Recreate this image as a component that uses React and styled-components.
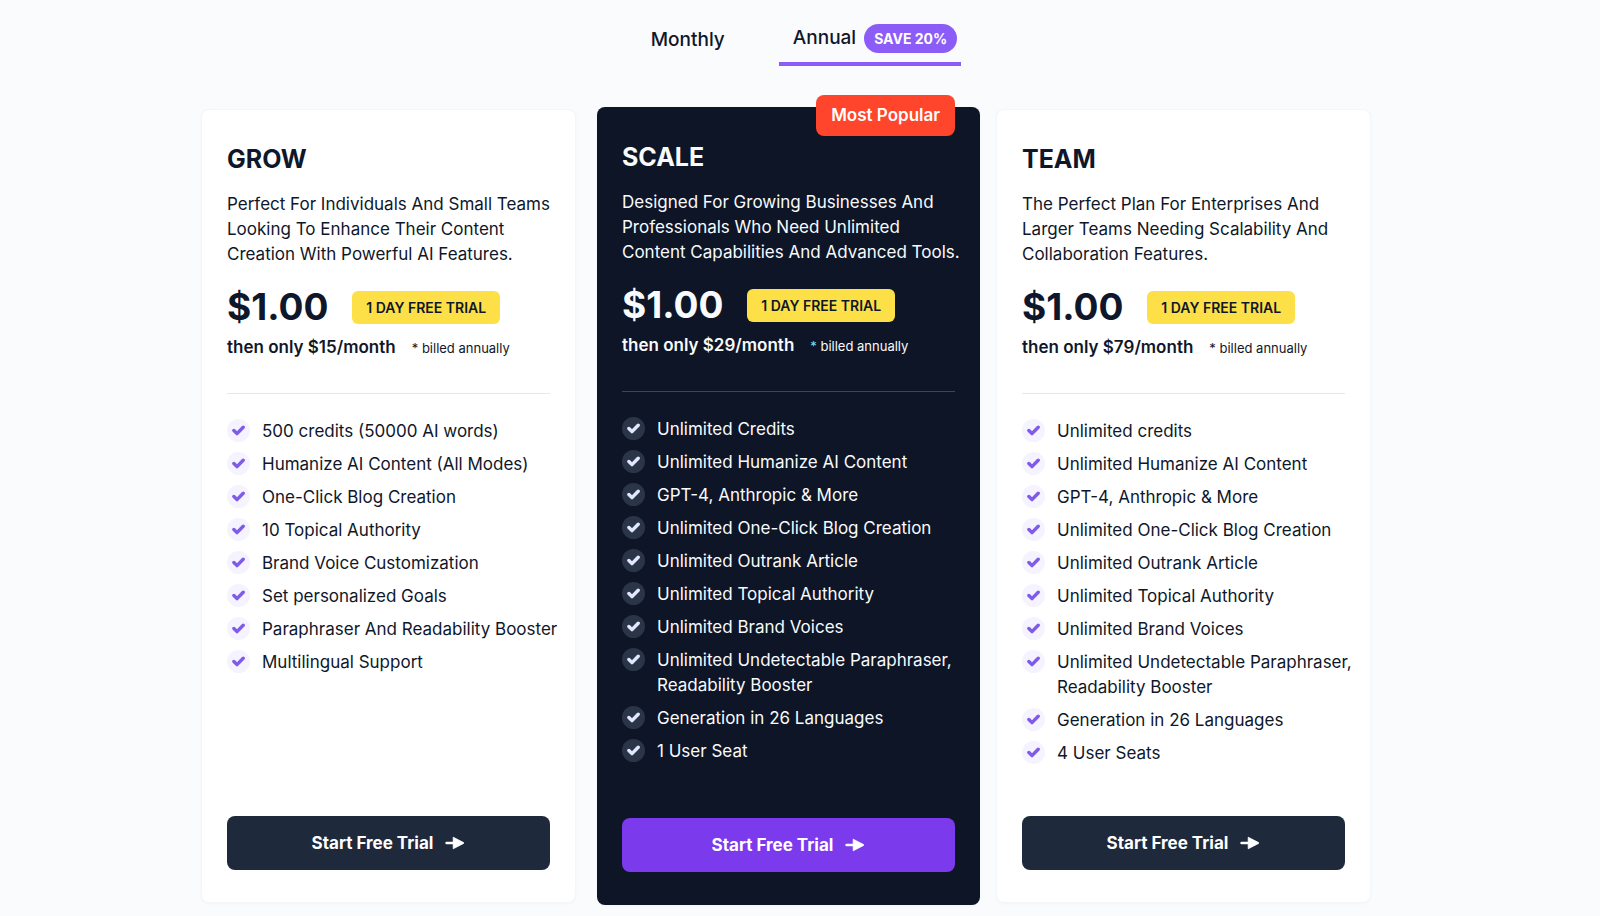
import React from "react";
import styled, { createGlobalStyle } from "styled-components";
import { useState } from "react";

const GlobalStyle = createGlobalStyle`
  * {
    box-sizing: border-box;
  }

  body {
    margin: 0;
    background-color: #fafbfd;
    color: #0f172a;
    font-family: "Inter", "Liberation Sans", sans-serif;
    font-size: 17px;
    line-height: 25px;
  }

  button {
    font-family: inherit;
    cursor: pointer;
  }
`;

const Page = styled.main`
  padding: 12px 42px 11px 14px;
`;

const Container = styled.div`
  max-width: 1170px;
  margin: 0 auto;
`;

const BillingTabs = styled.div`
  display: flex;
  justify-content: center;
  gap: 14px;
  margin-bottom: 41px;
`;

const BillingTab = styled.button`
  display: flex;
  align-items: center;
  gap: 8px;
  height: 54px;
  padding: ${(props) => (props.$active ? "2px 4px 0 14px" : "2px 40px 0")};
  border: 0;
  border-bottom: ${(props) => (props.$active ? "4px solid #8b5cf6" : "0")};
  background: none;
  color: #0f172a;
  font-size: 19px;
  font-weight: 500;
  line-height: 28px;
`;

const SaveBadge = styled.span`
  padding: 0 10px;
  border-radius: 15px;
  background-color: #8b5cf6;
  color: white;
  font-size: 14px;
  font-weight: 700;
  line-height: 29px;
`;

const Plans = styled.div`
  display: grid;
  grid-template-columns: 375fr 388fr 375fr;
  gap: 16px;
`;

const Card = styled.article`
  position: relative;
  display: flex;
  flex-direction: column;
  padding: ${(props) => (props.$featured ? "34px 25px 33px" : "33px 25px 32px")};
  margin: ${(props) => (props.$featured ? "0 0 0 5px" : "2px 0")};
  border: ${(props) => (props.$featured ? "0" : "1px solid #f4f6fa")};
  border-radius: 8px;
  background-color: ${(props) => (props.$featured ? "#0d1527" : "white")};
  color: ${(props) => (props.$featured ? "#f8fafc" : "#0f172a")};
  box-shadow: 0 1px 3px rgba(15, 23, 42, 0.03);
`;

const PopularBadge = styled.span`
  position: absolute;
  top: -12px;
  right: 25px;
  padding: 0 15px;
  border-radius: 8px;
  background-color: #ff452c;
  color: white;
  font-weight: 600;
  line-height: 41px;
`;

const PlanName = styled.h2`
  margin: 0 0 17px;
  font-size: 25px;
  font-weight: 700;
  line-height: 32px;
`;

/* text blocks run a little into the card padding so long lines don't wrap */
const Description = styled.p`
  margin: 0 -8px 15px 0;
`;

const PriceRow = styled.div`
  display: flex;
  align-items: center;
  gap: 24px;
`;

const Price = styled.span`
  font-size: 37px;
  font-weight: 700;
  line-height: 50px;
`;

const TrialBadge = styled.span`
  padding: 0 14px;
  border-radius: 6px;
  background-color: #fde047;
  color: #0f172a;
  font-size: 14px;
  font-weight: 600;
  line-height: 33px;
`;

const RenewalRow = styled.div`
  display: flex;
  align-items: baseline;
  gap: 16px;
  height: 25px;
  margin: 3px 0 33px;
`;

const Renewal = styled.strong`
  font-weight: 600;
`;

const BilledNote = styled.span`
  font-size: 13px;
`;

const Star = styled.span`
  color: ${(props) => (props.$featured ? "#67e8f9" : "inherit")};
`;

const Divider = styled.hr`
  width: 100%;
  height: 1px;
  margin: 0 0 25px;
  border: 0;
  background-color: ${(props) => (props.$featured ? "#3a465a" : "#e2e8f0")};
`;

const FeatureList = styled.ul`
  display: flex;
  flex-direction: column;
  gap: 8px;
  margin: 0 -8px 0 0;
  padding: 0 0 ${(props) => (props.$featured ? "54px" : "50px")};
  list-style: none;
`;

const Feature = styled.li`
  display: flex;
  align-items: flex-start;
  gap: 12px;
`;

const CheckCircle = styled.span`
  display: flex;
  flex: none;
  align-items: center;
  justify-content: center;
  width: 23px;
  height: 23px;
  border-radius: 50%;
  background-color: ${(props) => (props.$featured ? "#2b3548" : "#f5f3ff")};
  color: ${(props) => (props.$featured ? "#e0e7ff" : "#7f5be9")};
`;

const StartButton = styled.button`
  display: flex;
  align-items: center;
  justify-content: center;
  gap: 12px;
  height: 54px;
  margin-top: auto;
  border: 0;
  border-radius: 8px;
  background-color: ${(props) => (props.$featured ? "#7c3aed" : "#1e293b")};
  color: white;
  font-size: 17px;
  font-weight: 700;
`;

const CheckIcon = () => (
  <svg width="13" height="11" viewBox="0 0 13 11" fill="none" aria-hidden="true">
    <path
      d="M1.9 5.5 5 8.6 11.2 2.2"
      stroke="currentColor"
      strokeWidth="3.4"
      strokeLinecap="round"
      strokeLinejoin="round"
    />
  </svg>
);

const ArrowIcon = () => (
  <svg width="20" height="14" viewBox="0 0 20 14" aria-hidden="true">
    <path d="M1.6 7H10" stroke="currentColor" strokeWidth="2.6" strokeLinecap="round" />
    <path
      d="M8.2 1.2 18.6 6.6Q19.2 7 18.6 7.4L8.2 12.8Z"
      fill="currentColor"
      stroke="currentColor"
      strokeWidth="0.8"
      strokeLinejoin="round"
    />
  </svg>
);

const plans = [
  {
    name: "GROW",
    description:
      "Perfect For Individuals And Small Teams Looking To Enhance Their Content Creation With Powerful AI Features.",
    monthly: "$15",
    features: [
      "500 credits (50000 AI words)",
      "Humanize AI Content (All Modes)",
      "One-Click Blog Creation",
      "10 Topical Authority",
      "Brand Voice Customization",
      "Set personalized Goals",
      "Paraphraser And Readability Booster",
      "Multilingual Support",
    ],
  },
  {
    name: "SCALE",
    featured: true,
    description:
      "Designed For Growing Businesses And Professionals Who Need Unlimited Content Capabilities And Advanced Tools.",
    monthly: "$29",
    features: [
      "Unlimited Credits",
      "Unlimited Humanize AI Content",
      "GPT-4, Anthropic & More",
      "Unlimited One-Click Blog Creation",
      "Unlimited Outrank Article",
      "Unlimited Topical Authority",
      "Unlimited Brand Voices",
      "Unlimited Undetectable Paraphraser, Readability Booster",
      "Generation in 26 Languages",
      "1 User Seat",
    ],
  },
  {
    name: "TEAM",
    description:
      "The Perfect Plan For Enterprises And Larger Teams Needing Scalability And Collaboration Features.",
    monthly: "$79",
    features: [
      "Unlimited credits",
      "Unlimited Humanize AI Content",
      "GPT-4, Anthropic & More",
      "Unlimited One-Click Blog Creation",
      "Unlimited Outrank Article",
      "Unlimited Topical Authority",
      "Unlimited Brand Voices",
      "Unlimited Undetectable Paraphraser, Readability Booster",
      "Generation in 26 Languages",
      "4 User Seats",
    ],
  },
];

const PlanCard = ({ plan }) => {
  const featured = plan.featured;

  return (
    <Card $featured={featured}>
      {featured && <PopularBadge>Most Popular</PopularBadge>}
      <PlanName>{plan.name}</PlanName>
      <Description>{plan.description}</Description>
      <PriceRow>
        <Price>$1.00</Price>
        <TrialBadge>1 DAY FREE TRIAL</TrialBadge>
      </PriceRow>
      <RenewalRow>
        <Renewal>then only {plan.monthly}/month</Renewal>
        <BilledNote>
          <Star $featured={featured}>*</Star> billed annually
        </BilledNote>
      </RenewalRow>
      <Divider $featured={featured} />
      <FeatureList $featured={featured}>
        {plan.features.map((feature) => (
          <Feature key={feature}>
            <CheckCircle $featured={featured}>
              <CheckIcon />
            </CheckCircle>
            {feature}
          </Feature>
        ))}
      </FeatureList>
      <StartButton $featured={featured}>
        Start Free Trial
        <ArrowIcon />
      </StartButton>
    </Card>
  );
};

const App = () => {
  const [billing, setBilling] = useState("annual");

  return (
    <>
      <GlobalStyle />
      <Page>
        <Container>
          <BillingTabs>
            <BillingTab
              $active={billing === "monthly"}
              onClick={() => setBilling("monthly")}
            >
              Monthly
            </BillingTab>
            <BillingTab
              $active={billing === "annual"}
              onClick={() => setBilling("annual")}
            >
              Annual
              <SaveBadge>SAVE 20%</SaveBadge>
            </BillingTab>
          </BillingTabs>
          <Plans>
            {plans.map((plan) => (
              <PlanCard key={plan.name} plan={plan} />
            ))}
          </Plans>
        </Container>
      </Page>
    </>
  );
};

export default App;
